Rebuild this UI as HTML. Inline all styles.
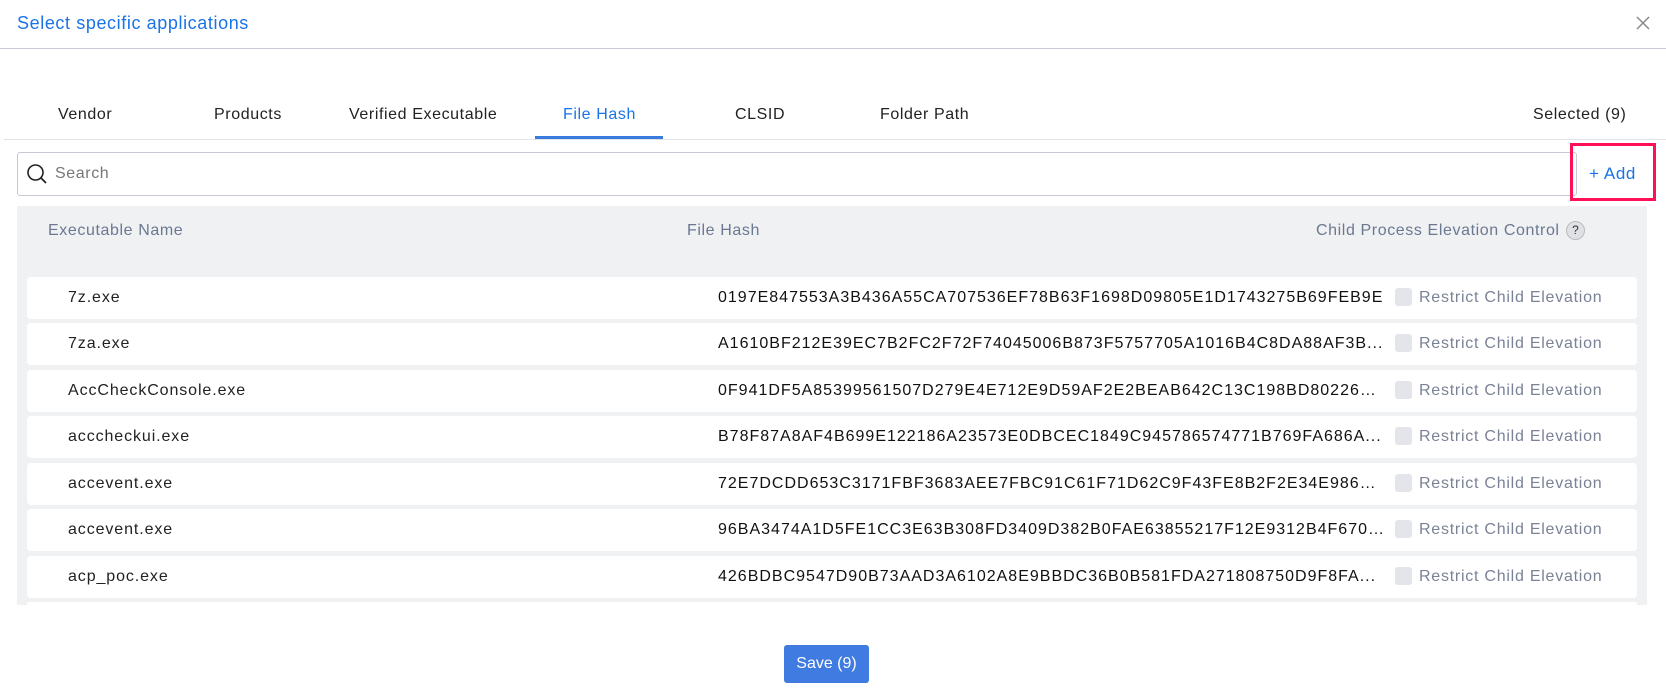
<!DOCTYPE html>
<html><head><meta charset="utf-8"><style>
*{margin:0;padding:0;box-sizing:border-box}
body{width:1666px;height:693px;background:#fff;font-family:"Liberation Sans",sans-serif;position:relative;overflow:hidden;color:#222;letter-spacing:0.6px}
.a{position:absolute;white-space:nowrap}
.tab{position:absolute;top:106px;font-size:16px;color:#222}
.row{position:absolute;left:27px;width:1610px;height:42px;background:#fff;border-radius:4px}
.row span{position:absolute;top:12px;font-size:16px;line-height:18px}
.nm{left:41px;color:#222;letter-spacing:0.9px}
.hs{left:691px;color:#111;width:666px;overflow:hidden;text-overflow:ellipsis;letter-spacing:1px}
.cb{position:absolute;left:1368px;top:11px;width:17px;height:18px;background:#e4e5ea;border-radius:3px}
.rc{left:1392px;color:#7a8296;letter-spacing:0.75px}
</style></head><body>
<div class="a" style="left:17px;top:13px;font-size:18px;color:#1a73e8">Select specific applications</div>
<svg class="a" style="left:1636px;top:16px" width="14" height="14"><path d="M1 1L13 13M13 1L1 13" stroke="#888" stroke-width="1.5"/></svg>
<div class="a" style="left:0;top:48px;width:1666px;height:1px;background:#c8cbd4"></div>

<div class="tab" style="left:58px">Vendor</div>
<div class="tab" style="left:214px">Products</div>
<div class="tab" style="left:349px">Verified Executable</div>
<div class="tab" style="left:563px;color:#1a73e8">File Hash</div>
<div class="tab" style="left:735px">CLSID</div>
<div class="tab" style="left:880px">Folder Path</div>
<div class="tab" style="left:1533px">Selected (9)</div>
<div class="a" style="left:535px;top:136px;width:128px;height:3px;background:#3a7be0"></div>
<div class="a" style="left:4px;top:139px;width:1662px;height:1px;background:#e0e2e6"></div>

<div class="a" style="left:17px;top:152px;width:1560px;height:44px;border:1px solid #c6c9d1;border-radius:3px"></div>
<svg class="a" style="left:26px;top:163px" width="22" height="22"><circle cx="9.5" cy="9.5" r="7.5" fill="none" stroke="#222" stroke-width="1.6"/><path d="M15 15L20 20" stroke="#222" stroke-width="1.8"/></svg>
<div class="a" style="left:55px;top:165px;font-size:16px;color:#777">Search</div>
<div class="a" style="left:1570px;top:143px;width:86px;height:58px;border:3.5px solid #ff0f55"></div>
<div class="a" style="left:1589px;top:164px;font-size:17px;color:#1a73e8">+ Add</div>

<div class="a" style="left:17px;top:206px;width:1630px;height:399px;background:#f0f1f3;overflow:hidden">
<div class="a" style="left:31px;top:16px;font-size:16px;color:#6b7891">Executable Name</div>
<div class="a" style="left:670px;top:16px;font-size:16px;color:#6b7891">File Hash</div>
<div class="a" style="left:1299px;top:16px;font-size:16px;color:#6b7891">Child Process Elevation Control</div>
<div class="a" style="left:1549px;top:15px;width:19px;height:19px;border-radius:50%;background:#e0e1e5;border:1px solid #bbb;font-size:12px;text-align:center;line-height:17px;color:#333;letter-spacing:0">?</div>
</div>

<div class="row" style="top:277px"><span class="nm">7z.exe</span><span class="hs">0197E847553A3B436A55CA707536EF78B63F1698D09805E1D1743275B69FEB9E</span><div class="cb"></div><span class="rc">Restrict Child Elevation</span></div>
<div class="row" style="top:323px"><span class="nm">7za.exe</span><span class="hs">A1610BF212E39EC7B2FC2F72F74045006B873F5757705A1016B4C8DA88AF3B...</span><div class="cb"></div><span class="rc">Restrict Child Elevation</span></div>
<div class="row" style="top:370px"><span class="nm">AccCheckConsole.exe</span><span class="hs">0F941DF5A85399561507D279E4E712E9D59AF2E2BEAB642C13C198BD80226A...</span><div class="cb"></div><span class="rc">Restrict Child Elevation</span></div>
<div class="row" style="top:416px"><span class="nm">acccheckui.exe</span><span class="hs">B78F87A8AF4B699E122186A23573E0DBCEC1849C945786574771B769FA686A...</span><div class="cb"></div><span class="rc">Restrict Child Elevation</span></div>
<div class="row" style="top:463px"><span class="nm">accevent.exe</span><span class="hs">72E7DCDD653C3171FBF3683AEE7FBC91C61F71D62C9F43FE8B2F2E34E9861E...</span><div class="cb"></div><span class="rc">Restrict Child Elevation</span></div>
<div class="row" style="top:509px"><span class="nm">accevent.exe</span><span class="hs">96BA3474A1D5FE1CC3E63B308FD3409D382B0FAE63855217F12E9312B4F670...</span><div class="cb"></div><span class="rc">Restrict Child Elevation</span></div>
<div class="row" style="top:556px"><span class="nm">acp_poc.exe</span><span class="hs">426BDBC9547D90B73AAD3A6102A8E9BBDC36B0B581FDA271808750D9F8FA...</span><div class="cb"></div><span class="rc">Restrict Child Elevation</span></div>
<div class="row" style="top:602px;height:3px"></div>

<div class="a" style="left:784px;top:645px;width:85px;height:38px;background:#3f7be0;border-radius:3px;color:#fff;font-size:16px;text-align:center;line-height:38px;letter-spacing:0">Save (9)</div>
</body></html>
